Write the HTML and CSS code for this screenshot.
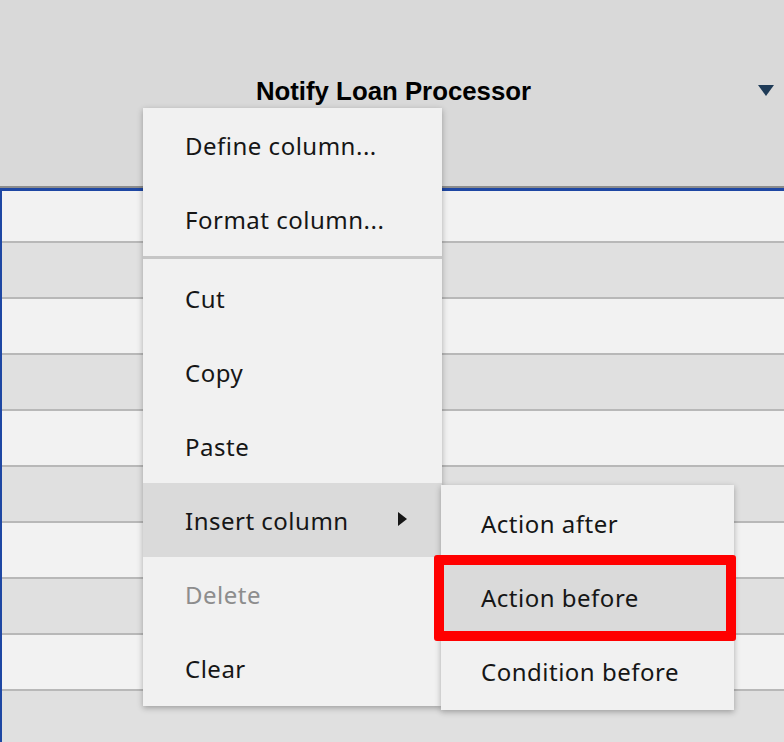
FILE: index.html
```html
<!DOCTYPE html>
<html>
<head>
<meta charset="utf-8">
<link rel="stylesheet" href="styles.css">
</head>
<body>
<div class="page">
  <div class="header">
    <div class="title">Notify Loan Processor</div>
    <svg class="dd" width="16" height="12" viewBox="0 0 16 12"><path d="M0 0 H16 L8 11 Z" fill="#1f3b57"/></svg>
  </div>
  <div class="rule"></div>
  <div class="table">
    <div class="row light first"></div>
    <div class="row dark"></div>
    <div class="row light"></div>
    <div class="row dark"></div>
    <div class="row light"></div>
    <div class="row dark"></div>
    <div class="row light"></div>
    <div class="row dark"></div>
    <div class="row light"></div>
    <div class="row dark last"></div>
  </div>

  <div class="menu main">
    <div class="item">Define column...</div>
    <div class="item">Format column...</div>
    <div class="sep"></div>
    <div class="item">Cut</div>
    <div class="item">Copy</div>
    <div class="item">Paste</div>
    <div class="item active">Insert column
      <svg class="caret" width="9" height="14" viewBox="0 0 9 14"><path d="M0 0 L9 7 L0 14 Z" fill="#161616"/></svg>
    </div>
    <div class="item disabled">Delete</div>
    <div class="item">Clear</div>
  </div>

  <div class="menu sub">
    <div class="item">Action after</div>
    <div class="item active">Action before</div>
    <div class="item">Condition before</div>
  </div>

  <div class="callout"></div>
</div>
</body>
</html>
```

FILE: styles.css
```css
* { box-sizing: border-box; }
html, body { margin: 0; padding: 0; }
body { width: 784px; height: 742px; overflow: hidden; background: #e0e0e0; }
.page { position: relative; width: 784px; height: 742px; overflow: hidden; }

.header {
  height: 186px;
  background: #d9d9d9;
  display: flex;
  align-items: center;
  justify-content: center;
  position: relative;
}
.title {
  font-family: "Liberation Sans", Arial, sans-serif;
  font-weight: bold;
  font-size: 25.8px;
  color: #000;
  margin-top: -3px;
  margin-left: 3px;
}
.dd { position: absolute; right: 10px; top: 85px; }

.rule {
  height: 5px;
  border-top: 2px solid #8c8c8c;
  background: #1e47a3;
}

.table { border-left: 2px solid #1e47a3; }
.row { height: 56px; border-bottom: 2px solid #b8b8b8; }
.row.first { height: 52px; }
.row.light { background: #f2f2f2; }
.row.dark { background: #e0e0e0; }
.row.last { border-bottom: none; height: 60px; }

.menu {
  position: absolute;
  background: #f1f1f1;
  box-shadow: 0 2px 6px rgba(0,0,0,0.3);
  font-family: "Noto Sans", "Open Sans", sans-serif;
  font-size: 24px;
  color: #161616;
}
.menu.main { left: 143px; top: 108px; width: 299px; padding-bottom: 1px; }
.menu.sub { left: 441px; top: 485px; width: 293px; padding-top: 1px; padding-bottom: 2px; }

.item {
  height: 74px;
  display: flex;
  align-items: center;
  padding-left: 42px;
  position: relative;
  letter-spacing: 0.5px;
}
.menu.sub .item { padding-left: 40px; }
.item.active { background: #dadada; }
.item.disabled { color: #8d8d8d; }
.sep { height: 3px; background: #c6c6c6; margin-bottom: 2px; }
.caret { position: absolute; left: 255px; top: 29px; }

.callout {
  position: absolute;
  left: 434px;
  top: 555px;
  width: 302px;
  height: 86px;
  border: 10px solid #ff0000;
  border-radius: 3px;
}
```
